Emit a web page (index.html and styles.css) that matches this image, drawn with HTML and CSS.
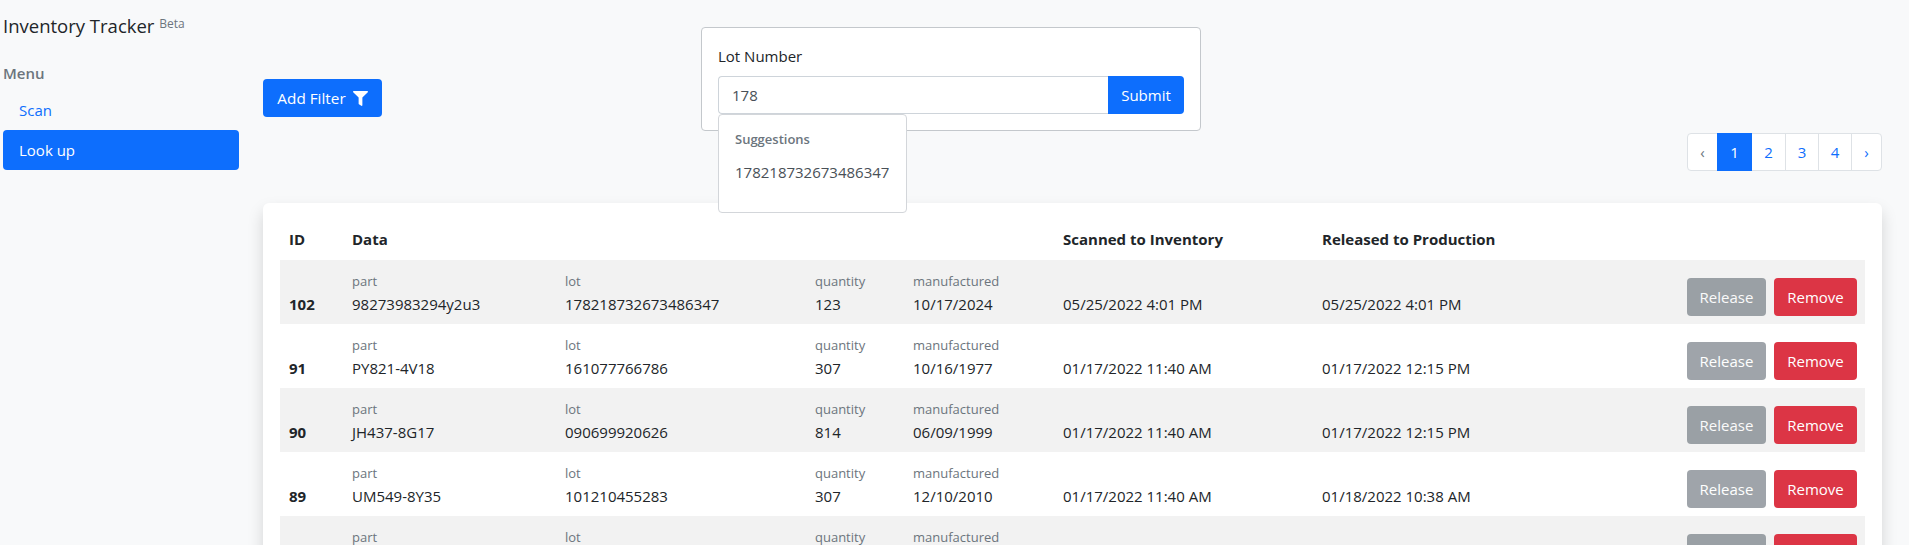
FILE: index.html
```html
<!DOCTYPE html>
<html lang="en">
<head>
<meta charset="utf-8">
<title>Inventory Tracker</title>
<link rel="stylesheet" href="styles.css">
</head>
<body>
<div class="layout">
  <aside class="sidebar">
    <div class="brand">Inventory Tracker <sup class="beta">Beta</sup></div>
    <div class="menu-title">Menu</div>
    <nav class="nav">
      <a class="nav-link" href="#">Scan</a>
      <a class="nav-link active" href="#">Look up</a>
    </nav>
  </aside>
  <main class="main">
    <div class="toolbar">
      <button class="btn btn-primary add-filter" type="button">Add Filter
        <svg class="funnel" viewBox="0 0 512 512" aria-hidden="true"><path fill="currentColor" d="M487.976 0H24.028C2.71 0-8.047 25.866 7.058 40.971L192 225.941V432c0 7.831 3.821 15.17 10.237 19.662l80 55.98C298.02 518.69 320 507.493 320 487.98V225.941l184.947-184.97C520.021 25.896 509.338 0 487.976 0z"/></svg>
      </button>
      <form class="lot-card">
        <label class="lot-label" for="lot">Lot Number</label>
        <div class="input-group">
          <input class="lot-input" id="lot" type="text" value="178">
          <button class="btn btn-primary submit" type="button">Submit</button>
          <div class="suggestions">
            <div class="suggestions-title">Suggestions</div>
            <div class="suggestion">178218732673486347</div>
          </div>
        </div>
      </form>
    </div>
    <div class="pager-row">
      <ul class="pager">
        <li class="page prev">‹</li>
        <li class="page current">1</li>
        <li class="page">2</li>
        <li class="page">3</li>
        <li class="page">4</li>
        <li class="page next">›</li>
      </ul>
    </div>
    <section class="table-card">
      <table class="table">
        <colgroup>
          <col class="c-id"><col class="c-part"><col class="c-lot"><col class="c-qty"><col class="c-mfg"><col class="c-scan"><col class="c-rel"><col class="c-act">
        </colgroup>
        <thead>
          <tr>
            <th>ID</th>
            <th colspan="4">Data</th>
            <th>Scanned to Inventory</th>
            <th>Released to Production</th>
            <th></th>
          </tr>
        </thead>
        <tbody>
          <tr>
            <td class="id">102</td>
            <td><span class="lbl">part</span>98273983294y2u3</td>
            <td><span class="lbl">lot</span>178218732673486347</td>
            <td><span class="lbl">quantity</span>123</td>
            <td><span class="lbl">manufactured</span>10/17/2024</td>
            <td>05/25/2022 4:01 PM</td>
            <td>05/25/2022 4:01 PM</td>
            <td class="actions"><button class="btn btn-release" type="button">Release</button><button class="btn btn-remove" type="button">Remove</button></td>
          </tr>
          <tr>
            <td class="id">91</td>
            <td><span class="lbl">part</span>PY821-4V18</td>
            <td><span class="lbl">lot</span>161077766786</td>
            <td><span class="lbl">quantity</span>307</td>
            <td><span class="lbl">manufactured</span>10/16/1977</td>
            <td>01/17/2022 11:40 AM</td>
            <td>01/17/2022 12:15 PM</td>
            <td class="actions"><button class="btn btn-release" type="button">Release</button><button class="btn btn-remove" type="button">Remove</button></td>
          </tr>
          <tr>
            <td class="id">90</td>
            <td><span class="lbl">part</span>JH437-8G17</td>
            <td><span class="lbl">lot</span>090699920626</td>
            <td><span class="lbl">quantity</span>814</td>
            <td><span class="lbl">manufactured</span>06/09/1999</td>
            <td>01/17/2022 11:40 AM</td>
            <td>01/17/2022 12:15 PM</td>
            <td class="actions"><button class="btn btn-release" type="button">Release</button><button class="btn btn-remove" type="button">Remove</button></td>
          </tr>
          <tr>
            <td class="id">89</td>
            <td><span class="lbl">part</span>UM549-8Y35</td>
            <td><span class="lbl">lot</span>101210455283</td>
            <td><span class="lbl">quantity</span>307</td>
            <td><span class="lbl">manufactured</span>12/10/2010</td>
            <td>01/17/2022 11:40 AM</td>
            <td>01/18/2022 10:38 AM</td>
            <td class="actions"><button class="btn btn-release" type="button">Release</button><button class="btn btn-remove" type="button">Remove</button></td>
          </tr>
          <tr>
            <td class="id">88</td>
            <td><span class="lbl">part</span>KR302-5T21</td>
            <td><span class="lbl">lot</span>120455283101</td>
            <td><span class="lbl">quantity</span>512</td>
            <td><span class="lbl">manufactured</span>03/22/2005</td>
            <td>01/17/2022 11:40 AM</td>
            <td>01/17/2022 12:15 PM</td>
            <td class="actions"><button class="btn btn-release" type="button">Release</button><button class="btn btn-remove" type="button">Remove</button></td>
          </tr>
        </tbody>
      </table>
    </section>
  </main>
</div>
</body>
</html>
```

FILE: styles.css
```css
* { box-sizing: border-box; }
html, body { height: 545px; overflow: hidden; }
body {
  margin: 0;
  background: #f8f9fa;
  color: #212529;
  font-family: "Open Sans", "Noto Sans", sans-serif;
  font-size: 15px;
  line-height: 24px;
}
.layout { display: flex; height: 545px; overflow: hidden; }

.sidebar { width: 263px; flex: none; padding: 0 24px 0 3px; }
.brand { font-size: 18.5px; line-height: 28px; padding-top: 12px; white-space: nowrap; }
.beta { font-size: 12px; color: #6c757d; line-height: 0; vertical-align: 5px; }
.menu-title { margin-top: 21px; color: #6c757d; font-weight: 600; line-height: 24px; }
.nav { display: flex; flex-direction: column; margin-top: 5px; }
.nav-link { display: block; height: 40px; padding: 8px 16px; color: #0d6efd; text-decoration: none; border-radius: 4px; }
.nav-link.active { background: #0d6efd; color: #fff; }

.main { flex: 1; min-width: 0; padding: 27px 27px 0 0; }
.toolbar { display: flex; align-items: flex-start; gap: 319px; }

.btn {
  display: inline-flex; align-items: center; justify-content: center;
  height: 38px; padding: 0 12px; border: 0; border-radius: 4px;
  font: inherit; color: #fff; white-space: nowrap;
}
.btn-primary { background: #0d6efd; }
.add-filter { margin-top: 52px; width: 119px; gap: 7px; padding: 0; font-size: 15.3px; }
.funnel { width: 15px; height: 15px; }

.lot-card {
  width: 500px; height: 104px; padding: 16px 16px 0 16px;
  background: #fff; border: 1px solid #c4c8cc; border-radius: 4px;
}
.lot-label { display: block; height: 24px; margin-bottom: 8px; color: #212529; }
.input-group { position: relative; display: flex; height: 38px; }
.lot-input {
  flex: 1; min-width: 0; height: 38px; padding: 0 13px;
  border: 1px solid #ced4da; border-right: 0; border-radius: 4px 0 0 4px;
  font: inherit; color: #495057; background: #fff;
}
.submit { width: 76px; padding: 0; border-radius: 0 4px 4px 0; }
.suggestions {
  position: absolute; left: 0; top: 38px; width: 189px; height: 99px;
  padding: 14px 16px 0; background: #fff; border: 1px solid #d3d6da; border-radius: 4px;
}
.suggestions-title { font-size: 13px; font-weight: 600; color: #6c757d; line-height: 20px; }
.suggestion { margin-top: 11px; line-height: 24px; color: #495057; }

.pager-row { display: flex; justify-content: flex-end; margin-top: 2px; }
.pager { display: flex; margin: 0; padding: 0; list-style: none; height: 38px; border: 1px solid #dee2e6; border-radius: 4px; background: #fff; }
.page { width: 33px; text-align: center; color: #0d6efd; line-height: 36px; border-left: 1px solid #dee2e6; }
.prev { width: 29px; border-left: 0; color: #6c757d; }
.next { width: 30px; }
.current { width: 35px; margin: -1px 0; line-height: 38px; background: #0d6efd; color: #fff; border-left: 0; }
.current + .page { border-left: 0; }

.table-card {
  margin-top: 32px; padding: 17px 17px 0; height: 500px;
  background: #fff; border-radius: 6px;
  box-shadow: 0 8px 16px rgba(0, 0, 0, .15);
}
.table { width: 100%; border-collapse: collapse; table-layout: fixed; }
.table th { height: 40px; padding: 0 8px 2px 9px; text-align: left; font-weight: 700; }
.table td { height: 64px; padding: 0 9px 8px; vertical-align: bottom; line-height: 24px; white-space: nowrap; }
.table tbody tr:nth-child(odd) { background: #f2f2f2; }
.lbl { display: block; font-size: 13px; line-height: 22px; color: #6c757d; }
.id { font-weight: 700; }
.c-id { width: 63px; }
.c-part { width: 213px; }
.c-lot { width: 250px; }
.c-qty { width: 98px; }
.c-mfg { width: 150px; }
.c-scan { width: 259px; }
.c-rel { width: 300px; }
.table .actions { padding: 0 8px 8px 0; vertical-align: bottom; text-align: right; }
.btn-release { width: 79px; margin-right: 8px; padding: 0; background: #6c757d; opacity: .65; }
.btn-remove { width: 83px; padding: 0; background: #dc3545; }
```
